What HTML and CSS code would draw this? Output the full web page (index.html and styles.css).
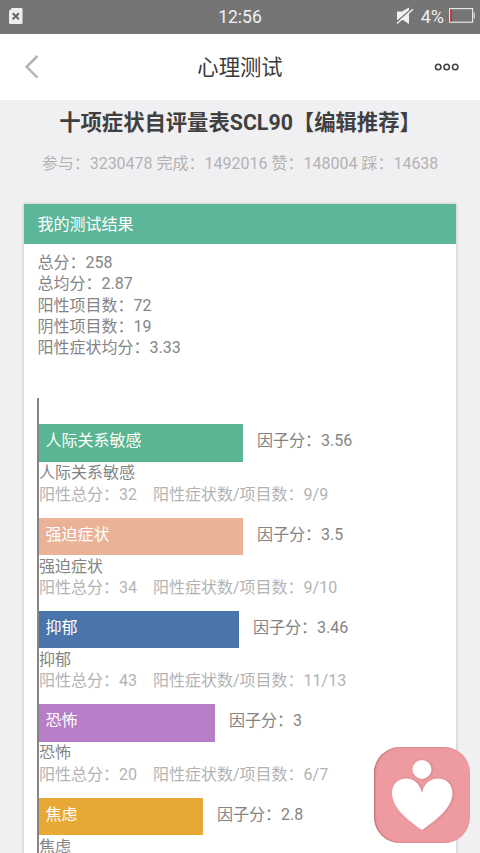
FILE: index.html
```html
<!DOCTYPE html>
<html lang="zh-CN">
<head>
    <meta charset="UTF-8">
    <meta name="viewport" content="width=device-width, initial-scale=1.0">
    <title>心理测试</title>
    <link rel="stylesheet" href="styles.css">
</head>
<body>

<div class="status-bar">
    <div class="status-left">
        <svg width="14" height="16" viewBox="0 0 14 16">
            <path d="M3 0H12.5Q13.500 0 13.500 1V15Q13.500 16 12.500 16H1Q0 16 0 15V3Z" fill="#eee"/>
            <path d="M3.700 5.300L9.900 11.300M9.900 5.300L3.700 11.300" stroke="#666" stroke-width="2"/>
        </svg>
    </div>
    <div class="status-time">12:56</div>
    <div class="status-right">
        <svg width="18" height="18" viewBox="0 0 18 18">
            <path d="M1 4.500H6L13 0.500V17L7 13H1Z" fill="#f2f2f2"/>
            <path d="M0 15.500L16 1.500" stroke="#757575" stroke-width="1.5"/>
            <path d="M1 16.500L17 2.300" stroke="#f2f2f2" stroke-width="1.500"/>
        </svg>
        <span class="battery-text">4%</span>
        <svg width="26" height="15" viewBox="0 0 26 15">
            <rect x="0.6" y="0.6" width="23" height="13.6" fill="none" stroke="#eee" stroke-width="1.1"/>
            <rect x="1.2" y="1.5" width="1.8" height="12" fill="#d32f2f"/>
            <rect x="24.600" y="4.500" width="1.200" height="6" fill="#ddd"/>
        </svg>
    </div>
</div>

<header class="nav">
    <svg class="back" width="16" height="26" viewBox="0 0 16 26">
        <path d="M13.500 2L2.600 12.800L13.500 23.600" fill="none" stroke="#b3b3b5" stroke-width="2.500"/>
    </svg>
    <div class="nav-title">心理测试</div>
    <svg class="more" width="26" height="10" viewBox="0 0 26 10">
        <g fill="none" stroke="#444" stroke-width="1.6">
            <circle cx="4.2" cy="5" r="2.7"/>
            <circle cx="12.7" cy="5" r="2.7"/>
            <circle cx="21.2" cy="5" r="2.7"/>
        </g>
    </svg>
</header>

<main>
    <h1>十项症状自评量表SCL90【编辑推荐】</h1>
    <p class="stats">参与：3230478 完成：1492016 赞：148004 踩：14638</p>

    <section class="card">
        <div class="card-header">我的测试结果</div>
        <div class="summary">
            <div>总分：258</div>
            <div>总均分：2.87</div>
            <div>阳性项目数：72</div>
            <div>阴性项目数：19</div>
            <div>阳性症状均分：3.33</div>
        </div>
        <div class="chart">
            <div class="factor">
                <div class="row">
                    <div class="bar green" style="width: 204px">人际关系敏感</div>
                    <div class="score">因子分：3.56</div>
                </div>
                <div class="name">人际关系敏感</div>
                <div class="detail"><span>阳性总分：32</span><span>阳性症状数/项目数：9/9</span></div>
            </div>
            <div class="factor">
                <div class="row">
                    <div class="bar peach" style="width: 204px">强迫症状</div>
                    <div class="score">因子分：3.5</div>
                </div>
                <div class="name">强迫症状</div>
                <div class="detail"><span>阳性总分：34</span><span>阳性症状数/项目数：9/10</span></div>
            </div>
            <div class="factor">
                <div class="row">
                    <div class="bar blue" style="width: 200px">抑郁</div>
                    <div class="score">因子分：3.46</div>
                </div>
                <div class="name">抑郁</div>
                <div class="detail"><span>阳性总分：43</span><span>阳性症状数/项目数：11/13</span></div>
            </div>
            <div class="factor">
                <div class="row">
                    <div class="bar purple" style="width: 176px">恐怖</div>
                    <div class="score">因子分：3</div>
                </div>
                <div class="name">恐怖</div>
                <div class="detail"><span>阳性总分：20</span><span>阳性症状数/项目数：6/7</span></div>
            </div>
            <div class="factor">
                <div class="row">
                    <div class="bar orange" style="width: 164px">焦虑</div>
                    <div class="score">因子分：2.8</div>
                </div>
                <div class="name">焦虑</div>
            </div>
        </div>
    </section>
</main>

<div class="float-button">
    <svg width="96" height="96" viewBox="0 0 96 96">
        <g class="figure" fill="#fff">
            <circle cx="48" cy="22.400" r="9.500"/>
            <path d="M48 46C46 36 39 31.500 32.500 31.500C24 31.500 18 37.500 18 46C18 61 34 73.500 48 83C62 73.500 78.500 61 78.500 46C78.500 37.500 72.500 31.500 64 31.500C57 31.500 50 36 48 46Z"/>
        </g>
    </svg>
</div>

</body>
</html>
```
FILE: styles.css
```css
* { box-sizing: border-box; }
body {
    margin: 0;
    height: 853px;
    overflow: hidden;
    background: #f0f0f2;
    color: #848484;
    font-family: Roboto, "Noto Sans CJK SC", sans-serif;
    font-size: 16px;
    line-height: 21.33px;
}

.status-bar {
    display: grid;
    grid-template-columns: 1fr auto 1fr;
    align-items: center;
    height: 34px;
    padding: 0 5px 2px 9px;
    background: #757575;
    color: #f0f0f0;
}
.status-left { display: flex; }
.status-time { padding: 4px 4px 0 0; font-size: 17.5px; }
.status-right { display: flex; justify-content: flex-end; align-items: center; }
.battery-text { margin: 1px 5px 0 7px; font-size: 18px; }

.nav {
    display: flex;
    align-items: center;
    justify-content: space-between;
    height: 66px;
    padding: 0 20px 0 24px;
    background: #fff;
}
.nav-title { padding: 2px 0 0 6px; font-size: 21.33px; color: #3a3a3a; }

h1 {
    margin: 0;
    padding-top: 8px;
    font-size: 21.33px;
    line-height: 29px;
    font-weight: 700;
    text-align: center;
    color: #404040;
}
.stats { margin: 16px 0 0; text-align: center; color: #b3b3b3; }

.card {
    margin: 30px 24px 0;
    background: #fff;
    box-shadow: 0 0 3px rgba(0, 0, 0, 0.25);
}
.card-header {
    height: 40px;
    padding-left: 13.5px;
    line-height: 41px;
    background: #5cb79a;
    color: #fff;
}
.summary { padding: 7.6px 13.5px 0; }

.chart {
    margin: 39.4px 0 0 13px;
    padding-top: 26.4px;
    border-left: 2px solid #858585;
}
.factor { height: 93.33px; }
.row { display: flex; height: 37.9px; }
.bar {
    height: 37.33px;
    padding-left: 6.5px;
    line-height: 33px;
    color: #fff;
}
.score { padding-left: 14px; line-height: 33px; }
.detail { display: flex; gap: 16px; color: #b3b3b3; }

.green { background: #59b592; }
.peach { background: #eab297; }
.blue { background: #4a74ac; }
.purple { background: #b77dc6; }
.orange { background: #e8a836; }

.float-button {
    position: absolute;
    left: 374px;
    top: 747px;
    width: 96px;
    height: 96px;
    border-radius: 26px;
    background: #ed9ba0;
    box-shadow: inset 1px 0 2px #b9686e;
}
.figure { filter: drop-shadow(1px 0 1px #cc7f85); }
```
